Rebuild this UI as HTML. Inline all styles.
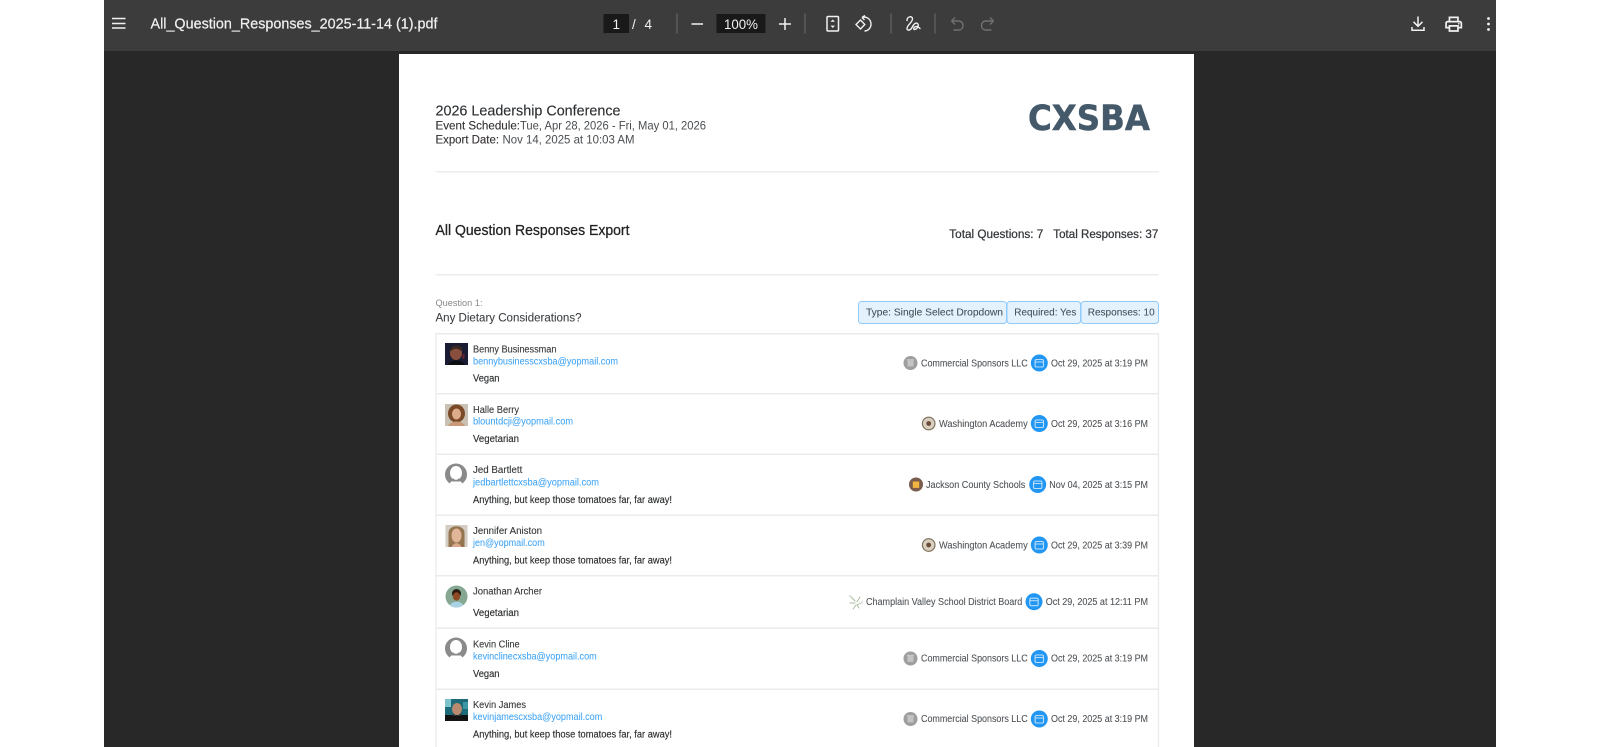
<!DOCTYPE html>
<html><head><meta charset="utf-8"><title>All_Question_Responses_2025-11-14 (1).pdf</title>
<style>
html,body{margin:0;padding:0;background:#fff;width:1600px;height:747px;overflow:hidden}
svg{display:block;filter:blur(.3px)}
text{font-family:"Liberation Sans",sans-serif}
.n{font-size:9.7px;fill:#37393b;stroke:#37393b;stroke-width:.12px}
.e{font-size:9.7px;fill:#42a5f5;stroke:#42a5f5;stroke-width:.06px}
.a{font-size:9.7px;fill:#2b2d2f;stroke:#2b2d2f;stroke-width:.14px}
.d{font-size:9.7px;fill:#4f5357;stroke:#4f5357;stroke-width:.08px}
</style></head><body>
<svg width="1600" height="747" viewBox="0 0 1600 747" xmlns="http://www.w3.org/2000/svg">
<defs>
<g id="cal"><circle r="8.5" fill="#2196f3"/><rect x="-4.2" y="-3.5" width="8.4" height="7.5" rx="1.4" fill="none" stroke="#bbdefb" stroke-width="1.1"/><path d="M-4.2-1H4.2" stroke="#bbdefb" stroke-width="1"/></g>
<g id="com"><circle r="7" fill="#9e9e9e"/><rect x="-3" y="-2.600" width="6" height="6" fill="#c4c4c4"/><path d="M-3.600-3.200H3.600" stroke="#d0d0d0"/></g>
<g id="wa"><circle r="6.300" fill="#d9cfc0" stroke="#7b6a55" stroke-width="1.100"/><circle r="2.400" fill="#6b4c38"/></g>
<g id="grey"><circle cx="11" cy="11" r="11" fill="#8a8a8a"/><ellipse cx="11" cy="9.500" rx="6" ry="7" fill="#fff"/><path d="M4.500 20.500C6 15.500 16 15.500 17.500 20.500L11 22.500Z" fill="#fff"/><path d="M8 14C8 17 14 17 14 14L15 18H7Z" fill="#8a8a8a"/></g>
</defs>
<rect x="104" y="0" width="1392" height="747" fill="#282828"/>
<rect x="104" y="0" width="1392" height="51" fill="#3c3c3c"/>
<rect x="399" y="54" width="795" height="693" fill="#fff"/>

<!-- toolbar -->
<path d="M112 18.500H125.500M112 23.500H125.500M112 28H125.500" stroke="#f1f1f1" stroke-width="1.500" fill="none"/>
<text x="150.500" y="28.300" font-size="14.500" fill="#f1f1f1" stroke="#f1f1f1" stroke-width=".2" textLength="287" lengthAdjust="spacingAndGlyphs">All_Question_Responses_2025-11-14 (1).pdf</text>
<rect x="603.500" y="14" width="25.500" height="19" fill="#191919"/>
<text x="612.500" y="28.800" font-size="13.500" fill="#f1f1f1">1</text>
<text x="632" y="28.800" font-size="13.500" fill="#f1f1f1">/</text>
<text x="644.500" y="28.800" font-size="13.500" fill="#f1f1f1">4</text>
<rect x="676.500" y="13.500" width="1" height="20" fill="#6a6a6a"/>
<path d="M691.500 24H703" stroke="#f1f1f1" stroke-width="1.500"/>
<rect x="716.500" y="14" width="49" height="19" fill="#191919"/>
<text x="724" y="28.800" font-size="13.500" fill="#f1f1f1" textLength="34" lengthAdjust="spacingAndGlyphs">100%</text>
<path d="M779 24H791M785 18V30" stroke="#f1f1f1" stroke-width="1.500"/>
<rect x="804.500" y="13.500" width="1" height="20" fill="#6a6a6a"/>
<rect x="827" y="16.500" width="11.500" height="14.500" rx="1" fill="none" stroke="#f1f1f1" stroke-width="1.500"/>
<path d="M830.500 21.800L832.700 19.500L835 21.800ZM830.500 25.600L832.700 28L835 25.600Z" fill="#f1f1f1"/>
<path d="M860.500 20L864.800 24.500L860.500 29L856 24.500Z" fill="none" stroke="#f1f1f1" stroke-width="1.400"/>
<path d="M862 17.500C867 16 871 19.500 871 24C871 28 868 31 864.500 31M862 17.500L865 15.500M862 17.500L864.500 20" fill="none" stroke="#f1f1f1" stroke-width="1.400"/>
<rect x="890.500" y="13.500" width="1" height="20" fill="#6a6a6a"/>
<path d="M907 20.500C907 16.500 912 15.500 912.500 18.500C913 22 907 25 907 28.500C907 31 910.500 30.500 912 27.500C913.500 24.500 915.500 22 917.500 23.500C919.500 25 917 29.500 914.500 29.500C913 29.500 913.500 27 916 26.500C917.500 26.300 919 27.500 920 28.500" fill="none" stroke="#f1f1f1" stroke-width="1.400" stroke-linecap="round"/>
<rect x="934.500" y="13.500" width="1" height="20" fill="#6a6a6a"/>
<path d="M951.500 21H958.500C961.500 21 963 23.200 963 25.500C963 28 961.500 30 958.500 30H953.500M951.500 21L955 17.500M951.500 21L955 24.500" fill="none" stroke="#707070" stroke-width="1.400"/>
<path d="M993.500 21H986C983 21 981.500 23.200 981.500 25.500C981.500 28 983 30 986 30H991.500M993.500 21L990 17.500M993.500 21L990 24.500" fill="none" stroke="#707070" stroke-width="1.400"/>
<path d="M1418 16.500V26M1413.500 21.800L1418 26.300L1422.500 21.800M1412 27V30.200H1424V27" fill="none" stroke="#f1f1f1" stroke-width="1.500"/>
<g transform="translate(1443.500 14) scale(.85)" fill="#f1f1f1"><path d="M19 8h-1V3H6v5H5c-1.660 0-3 1.340-3 3v6h4v4h12v-4h4v-6c0-1.660-1.340-3-3-3zM8 5h8v3H8V5zm8 12v2H8v-4h8v2zm2-2v-2H6v2H4v-4c0-.55.45-1 1-1h14c.55 0 1 .45 1 1v4h-2z"/><circle cx="18" cy="11.500" r="1"/></g>
<g fill="#f1f1f1"><circle cx="1488.500" cy="18.500" r="1.400"/><circle cx="1488.500" cy="24" r="1.400"/><circle cx="1488.500" cy="29.500" r="1.400"/></g>

<!-- header -->
<text x="435.500" y="115.500" font-size="14.500" fill="#2a2d30" stroke="#2a2d30" stroke-width=".12" textLength="185" lengthAdjust="spacingAndGlyphs">2026 Leadership Conference</text>
<text x="435.500" y="129.300" font-size="12.300" fill="#33302f" stroke="#33302f" stroke-width=".12" textLength="84.500" lengthAdjust="spacingAndGlyphs">Event Schedule:</text>
<text x="520" y="129.300" font-size="12.300" fill="#4a4d50" textLength="186" lengthAdjust="spacingAndGlyphs">Tue, Apr 28, 2026 - Fri, May 01, 2026</text>
<text x="435.500" y="143.300" font-size="12.300" fill="#33302f" stroke="#33302f" stroke-width=".12" textLength="63.500" lengthAdjust="spacingAndGlyphs">Export Date:</text>
<text x="502.500" y="143.300" font-size="12.300" fill="#4a4d50" textLength="132" lengthAdjust="spacingAndGlyphs">Nov 14, 2025 at 10:03 AM</text>
<text x="1028" y="130" font-size="35" font-weight="700" fill="#44596a" stroke="#44596a" stroke-width=".5" style='font-family:"DejaVu Sans",sans-serif' textLength="122" lengthAdjust="spacingAndGlyphs">CXSBA</text>
<rect x="435.500" y="171" width="723.500" height="1.500" fill="#ececec"/>
<text x="435.500" y="234.800" font-size="14.500" fill="#222" stroke="#222" stroke-width=".25" textLength="194" lengthAdjust="spacingAndGlyphs">All Question Responses Export</text>
<text x="949.300" y="238" font-size="12.300" fill="#33373a" stroke="#33373a" stroke-width=".25" textLength="94" lengthAdjust="spacingAndGlyphs">Total Questions: 7</text>
<text x="1053.300" y="238" font-size="12.300" fill="#33373a" stroke="#33373a" stroke-width=".25" textLength="105" lengthAdjust="spacingAndGlyphs">Total Responses: 37</text>
<rect x="435.500" y="274" width="723.500" height="1.500" fill="#ececec"/>

<!-- question -->
<text x="435.500" y="306" font-size="9.500" fill="#888" textLength="47" lengthAdjust="spacingAndGlyphs">Question 1:</text>
<text x="435.500" y="321.500" font-size="12.300" fill="#3c4043" stroke="#3c4043" stroke-width=".08" textLength="146" lengthAdjust="spacingAndGlyphs">Any Dietary Considerations?</text>
<g fill="#e3f2fd" stroke="#90caf9" stroke-width="1">
<rect x="858.500" y="301.500" width="148" height="22" rx="3"/>
<rect x="1007" y="301.500" width="73.500" height="22" rx="3"/>
<rect x="1081" y="301.500" width="77.500" height="22" rx="3"/>
</g>
<g font-size="10.500" fill="#455058" stroke="#455058" stroke-width=".08">
<text x="866" y="315.700" textLength="137" lengthAdjust="spacingAndGlyphs">Type: Single Select Dropdown</text>
<text x="1014.300" y="315.700" textLength="62" lengthAdjust="spacingAndGlyphs">Required: Yes</text>
<text x="1087.700" y="315.700" textLength="67" lengthAdjust="spacingAndGlyphs">Responses: 10</text>
</g>

<!-- table -->
<g fill="#ebebeb">
<rect x="435.300" y="333" width="723.500" height="1.500"/>
<rect x="435.300" y="333" width="1.300" height="414"/>
<rect x="1157.800" y="333" width="1.300" height="414"/>
<rect x="436" y="393" width="722" height="1.500"/>
<rect x="436" y="453.500" width="722" height="1.500"/>
<rect x="436" y="514.500" width="722" height="1.500"/>
<rect x="436" y="575" width="722" height="1.500"/>
<rect x="436" y="627.500" width="722" height="1.500"/>
<rect x="436" y="688.500" width="722" height="1.500"/>
</g>

<!-- avatars -->
<g transform="translate(445 343)"><rect width="23" height="22" fill="#1a1c33"/><ellipse cx="11" cy="10" rx="6" ry="7" fill="#8a4f3c"/><path d="M5 7C6 1 16 1 17.500 6L16 8C13 5 9 5 6 8Z" fill="#3a2820"/><path d="M3 22C5 16 17 16 20 22Z" fill="#0e0e12"/><rect x="17.500" y="11" width="2" height="5" fill="#6a1f2b"/></g>
<g transform="translate(445 404)"><rect width="23" height="22" fill="#c9c2b4"/><ellipse cx="11.500" cy="9.500" rx="8.500" ry="9" fill="#7a4a28"/><ellipse cx="11.500" cy="10" rx="4.500" ry="5.500" fill="#dcab8a"/><path d="M3 22C6 16 17 16 20 22Z" fill="#c89878"/></g>
<use href="#grey" x="445" y="463.500"/>
<g transform="translate(445.500 525)"><rect width="22" height="22" fill="#d3ccc3"/><path d="M3 22V8C3 -1 19 -1 19 8V22Z" fill="#94754f"/><ellipse cx="11" cy="10.500" rx="5" ry="7" fill="#e1b598"/><path d="M6 22C8 17 14 17 16 22Z" fill="#d8a98c"/></g>
<g transform="translate(445 585.500)"><circle cx="11.500" cy="11" r="11" fill="#86a892"/><ellipse cx="11.500" cy="8" rx="4.500" ry="4.500" fill="#2a1a12"/><ellipse cx="11.500" cy="11" rx="3.600" ry="4.200" fill="#8d4a24"/><path d="M5 20C6 15 17 15 18 20C15 22.500 8 22.500 5 20Z" fill="#a9d3e4"/></g>
<use href="#grey" x="445" y="637.500"/>
<g transform="translate(445 699)"><rect width="23" height="22" fill="#1d6a78"/><rect y="16" width="23" height="6" fill="#111"/><rect width="6" height="8" fill="#7cc3cc"/><rect x="18" y="3" width="5" height="7" fill="#3d97a6"/><ellipse cx="12" cy="10" rx="5" ry="6" fill="#b98a70"/><path d="M7.500 13C9 17.500 15 17.500 16.500 13L16 17H8Z" fill="#333"/><path d="M3 22C6 17 18 17 21 22Z" fill="#151515"/></g>

<!-- row 1 -->
<text class="n" x="473" y="352.300" textLength="83.500" lengthAdjust="spacingAndGlyphs">Benny Businessman</text>
<text class="e" x="473" y="364.300" textLength="145" lengthAdjust="spacingAndGlyphs">bennybusinesscxsba@yopmail.com</text>
<text class="a" x="473" y="381.700" textLength="26.500" lengthAdjust="spacingAndGlyphs">Vegan</text>
<use href="#com" x="910.500" y="363"/>
<text class="d" x="921" y="366.300" textLength="106.700" lengthAdjust="spacingAndGlyphs">Commercial Sponsors LLC</text>
<use href="#cal" x="1039.300" y="363"/>
<text class="d" x="1051" y="366.300" textLength="97" lengthAdjust="spacingAndGlyphs">Oct 29, 2025 at 3:19 PM</text>
<!-- row 2 -->
<text class="n" x="473" y="413" textLength="46" lengthAdjust="spacingAndGlyphs">Halle Berry</text>
<text class="e" x="473" y="424.500" textLength="100" lengthAdjust="spacingAndGlyphs">blountdcji@yopmail.com</text>
<text class="a" x="473" y="442" textLength="46" lengthAdjust="spacingAndGlyphs">Vegetarian</text>
<use href="#wa" x="928.700" y="423.500"/>
<text class="d" x="939" y="426.800" textLength="88.700" lengthAdjust="spacingAndGlyphs">Washington Academy</text>
<use href="#cal" x="1039.300" y="423.500"/>
<text class="d" x="1051" y="426.800" textLength="97" lengthAdjust="spacingAndGlyphs">Oct 29, 2025 at 3:16 PM</text>
<!-- row 3 -->
<text class="n" x="473" y="473" textLength="49.300" lengthAdjust="spacingAndGlyphs">Jed Bartlett</text>
<text class="e" x="473" y="485.300" textLength="126" lengthAdjust="spacingAndGlyphs">jedbartlettcxsba@yopmail.com</text>
<text class="a" x="473" y="503" textLength="199" lengthAdjust="spacingAndGlyphs">Anything, but keep those tomatoes far, far away!</text>
<circle cx="916" cy="484.500" r="7" fill="#795c4c"/><rect x="912.800" y="481.500" width="6.400" height="6.400" fill="#f2b544"/>
<text class="d" x="926" y="487.800" textLength="99.300" lengthAdjust="spacingAndGlyphs">Jackson County Schools</text>
<use href="#cal" x="1037.700" y="484.500"/>
<text class="d" x="1049.300" y="487.800" textLength="98.700" lengthAdjust="spacingAndGlyphs">Nov 04, 2025 at 3:15 PM</text>
<!-- row 4 -->
<text class="n" x="473" y="534" textLength="69" lengthAdjust="spacingAndGlyphs">Jennifer Aniston</text>
<text class="e" x="473" y="546" textLength="71.700" lengthAdjust="spacingAndGlyphs">jen@yopmail.com</text>
<text class="a" x="473" y="563.300" textLength="199" lengthAdjust="spacingAndGlyphs">Anything, but keep those tomatoes far, far away!</text>
<use href="#wa" x="928.700" y="545"/>
<text class="d" x="939" y="548.300" textLength="88.700" lengthAdjust="spacingAndGlyphs">Washington Academy</text>
<use href="#cal" x="1039.300" y="545"/>
<text class="d" x="1051" y="548.300" textLength="97" lengthAdjust="spacingAndGlyphs">Oct 29, 2025 at 3:39 PM</text>
<!-- row 5 -->
<text class="n" x="473" y="594.300" textLength="69" lengthAdjust="spacingAndGlyphs">Jonathan Archer</text>
<text class="a" x="473" y="616" textLength="46" lengthAdjust="spacingAndGlyphs">Vegetarian</text>
<g fill="none" stroke-width=".9" stroke-linecap="round"><path d="M851 597L855 601M860 597L857 602M850 603L855 603M861 603L857 605M853 609L856 605M859 608L857 605" stroke="#a3b898"/><path d="M849 596H851M862 601V603" stroke="#ccc"/></g>
<text class="d" x="866" y="605" textLength="156.300" lengthAdjust="spacingAndGlyphs">Champlain Valley School District Board</text>
<use href="#cal" x="1034" y="601.700"/>
<text class="d" x="1045.700" y="605" textLength="102.300" lengthAdjust="spacingAndGlyphs">Oct 29, 2025 at 12:11 PM</text>
<!-- row 6 -->
<text class="n" x="473" y="647.700" textLength="46.700" lengthAdjust="spacingAndGlyphs">Kevin Cline</text>
<text class="e" x="473" y="659.300" textLength="123.700" lengthAdjust="spacingAndGlyphs">kevinclinecxsba@yopmail.com</text>
<text class="a" x="473" y="677" textLength="26.500" lengthAdjust="spacingAndGlyphs">Vegan</text>
<use href="#com" x="910.500" y="658.500"/>
<text class="d" x="921" y="661.700" textLength="106.700" lengthAdjust="spacingAndGlyphs">Commercial Sponsors LLC</text>
<use href="#cal" x="1039.300" y="658.500"/>
<text class="d" x="1051" y="661.700" textLength="97" lengthAdjust="spacingAndGlyphs">Oct 29, 2025 at 3:19 PM</text>
<!-- row 7 -->
<text class="n" x="473" y="708" textLength="53" lengthAdjust="spacingAndGlyphs">Kevin James</text>
<text class="e" x="473" y="720" textLength="129.300" lengthAdjust="spacingAndGlyphs">kevinjamescxsba@yopmail.com</text>
<text class="a" x="473" y="737.300" textLength="199" lengthAdjust="spacingAndGlyphs">Anything, but keep those tomatoes far, far away!</text>
<use href="#com" x="910.500" y="719"/>
<text class="d" x="921" y="722" textLength="106.700" lengthAdjust="spacingAndGlyphs">Commercial Sponsors LLC</text>
<use href="#cal" x="1039.300" y="719"/>
<text class="d" x="1051" y="722" textLength="97" lengthAdjust="spacingAndGlyphs">Oct 29, 2025 at 3:19 PM</text>
</svg>
</body></html>
